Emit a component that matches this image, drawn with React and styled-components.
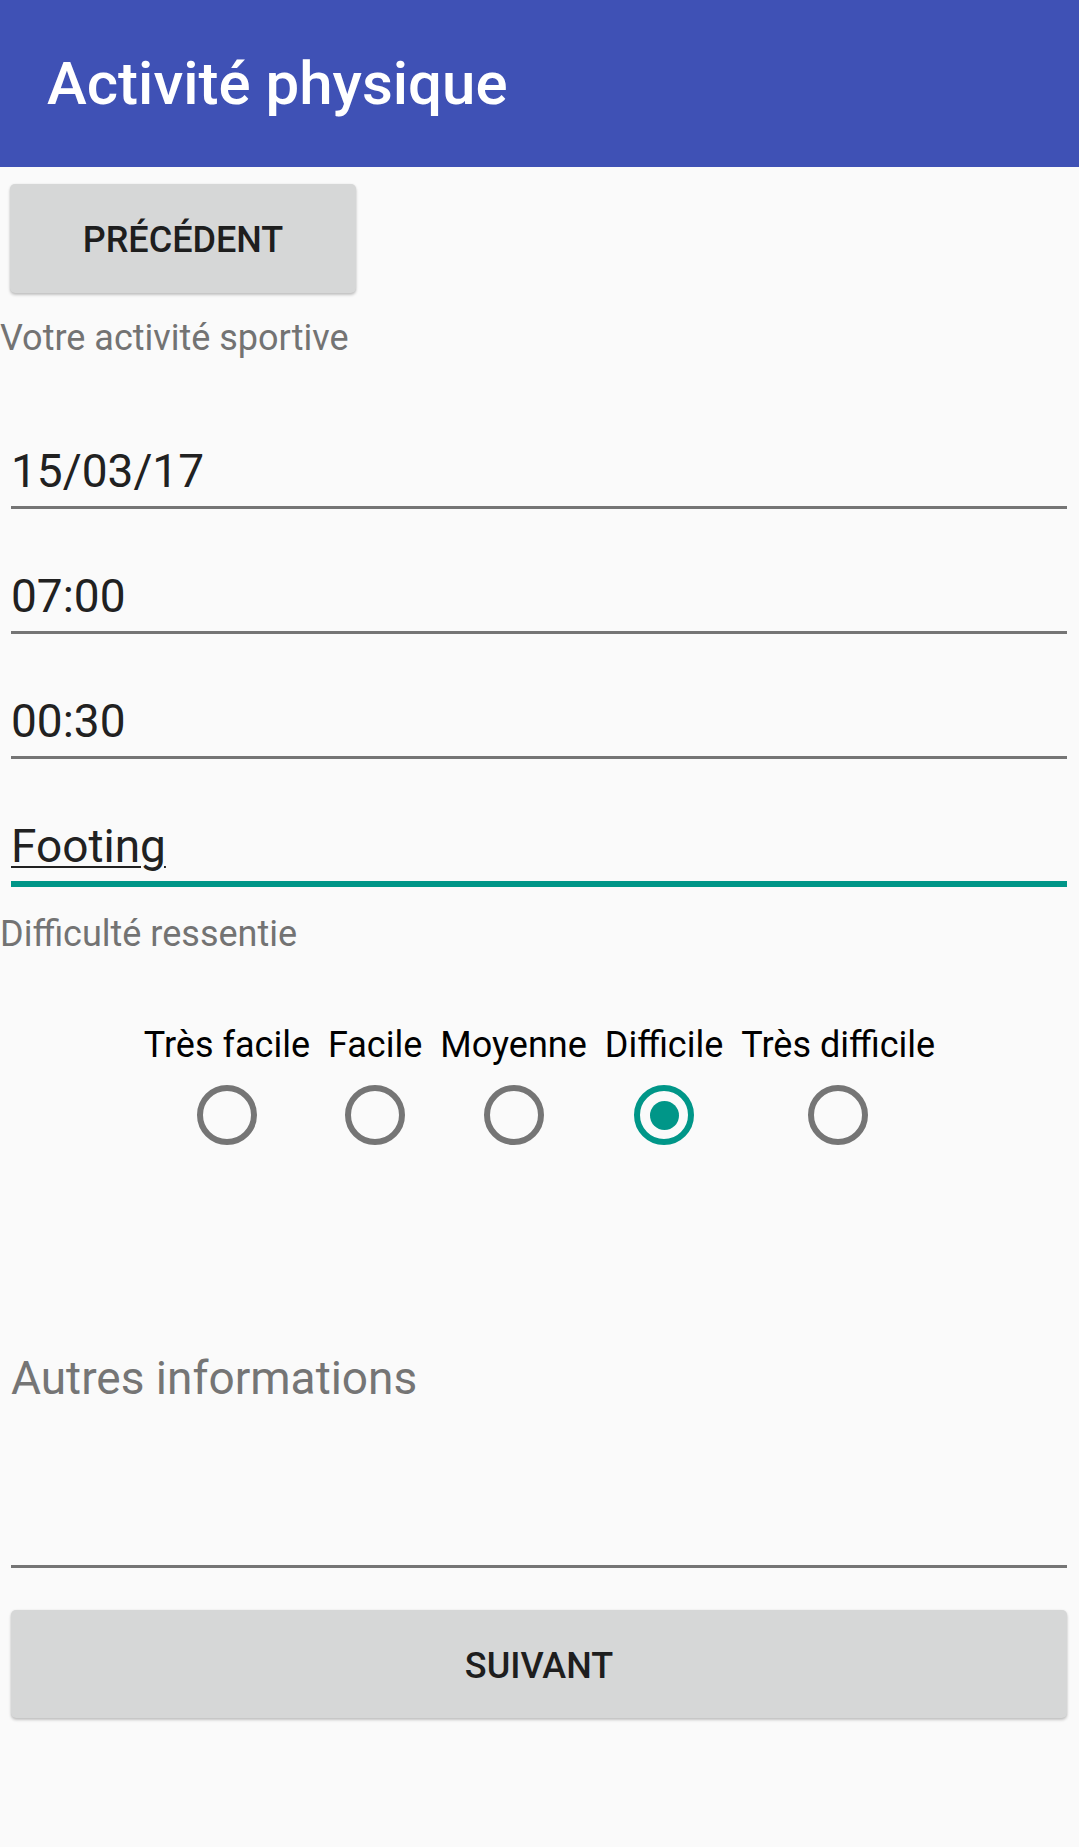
import React from 'react';
import styled, { createGlobalStyle } from 'styled-components';

const GlobalStyle = createGlobalStyle`
  body {
    margin: 0;
    background: #fafafa;
    font-family: Roboto, "Liberation Sans", sans-serif;
  }
`;

const levels = ['Très facile', 'Facile', 'Moyenne', 'Difficile', 'Très difficile'];

const App = () => {
  return (
    <Page>
      <GlobalStyle />
      <AppBar>
        <Title>Activité physique</Title>
      </AppBar>
      <Content>
        <RaisedButton>PRÉCÉDENT</RaisedButton>
        <SectionLabel>Votre activité sportive</SectionLabel>
        <Field gap={85}>15/03/17</Field>
        <Field>07:00</Field>
        <Field>00:30</Field>
        <Field focused>
          <Underlined>Footing</Underlined>
        </Field>
        <SectionLabel gap={26}>Difficulté ressentie</SectionLabel>
        <RadioGroup>
          {levels.map((label, i) => (
            <RadioColumn key={label}>
              <RadioLabel>{label}</RadioLabel>
              <Radio checked={i === 3} />
            </RadioColumn>
          ))}
        </RadioGroup>
        <TextArea>Autres informations</TextArea>
        <RaisedButton wide>SUIVANT</RaisedButton>
      </Content>
    </Page>
  );
};

export default App;

const Page = styled.div`
  min-height: 1847px;
  background: #fafafa;
`;

const AppBar = styled.header`
  height: 167px;
  box-sizing: border-box;
  padding: 3px 0 0 47px;
  background: #3f51b5;
`;

const Title = styled.h1`
  margin: 0;
  font-size: 60px;
  font-weight: 500;
  line-height: 161px;
  color: #ffffff;
`;

const Content = styled.main`
  display: flex;
  flex-direction: column;
  align-items: flex-start;
`;

const RaisedButton = styled.div`
  display: flex;
  align-items: center;
  justify-content: center;
  box-sizing: border-box;
  margin: ${p => (p.wide ? '42px 12px 0 11px' : '17px 0 0 10px')};
  align-self: ${p => (p.wide ? 'stretch' : 'flex-start')};
  width: ${p => (p.wide ? 'auto' : '346px')};
  height: ${p => (p.wide ? '108px' : '109px')};
  padding-top: 3px;
  border-radius: 5px;
  background: #d6d7d7;
  box-shadow: 0 2px 3px rgba(0, 0, 0, 0.22), 0 0 2px rgba(0, 0, 0, 0.08);
  font-size: 36px;
  font-weight: 500;
  line-height: 42px;
  color: #1e1e1e;
`;

const SectionLabel = styled.div`
  margin-top: ${p => p.gap || 24}px;
  font-size: 36px;
  line-height: 42px;
  color: #737373;
`;

const Field = styled.div`
  align-self: stretch;
  margin: ${p => p.gap || 60}px 12px 0 11px;
  padding-bottom: 8px;
  border-bottom: ${p => (p.focused ? '6px solid #009688' : '3px solid #757575')};
  font-size: 46px;
  line-height: 54px;
  color: #212121;
`;

const Underlined = styled.span`
  text-decoration: underline;
  text-decoration-thickness: 2px;
  text-underline-offset: 4px;
`;

const RadioGroup = styled.div`
  align-self: stretch;
  display: flex;
  justify-content: center;
  gap: 18px;
  margin-top: 69px;
`;

const RadioColumn = styled.div`
  display: flex;
  flex-direction: column;
  align-items: center;
  gap: 19px;
`;

const RadioLabel = styled.div`
  font-size: 36px;
  line-height: 42px;
  color: #000000;
  white-space: nowrap;
`;

const Radio = styled.div`
  display: flex;
  align-items: center;
  justify-content: center;
  box-sizing: border-box;
  width: 60px;
  height: 60px;
  border-radius: 50%;
  border: 6px solid ${p => (p.checked ? '#009688' : '#757575')};

  &::after {
    content: '';
    display: ${p => (p.checked ? 'block' : 'none')};
    width: 29px;
    height: 29px;
    border-radius: 50%;
    background: #009688;
  }
`;

const TextArea = styled.div`
  align-self: stretch;
  margin: 206px 12px 0 11px;
  height: 214px;
  border-bottom: 3px solid #757575;
  font-size: 46px;
  line-height: 54px;
  color: #757575;
`;
